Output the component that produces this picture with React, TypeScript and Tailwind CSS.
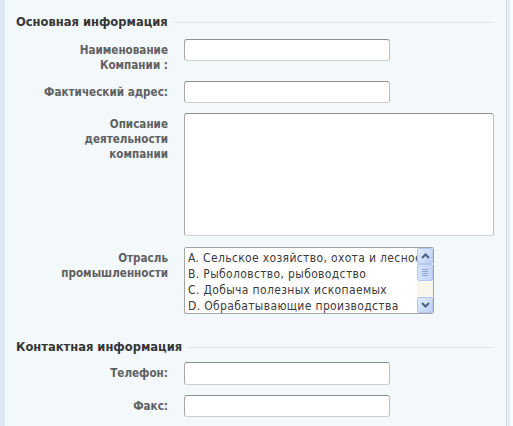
import React from "react";

const condensed = { fontFamily: "'DejaVu Sans Condensed', 'DejaVu Sans', sans-serif" };

function Field({ w, h }: { w: string; h: string }) {
  return (
    <div
      className={`${w} ${h} bg-white rounded-[3px] border border-t-[#8e8e8e] border-l-[#a6a6a6] border-r-[#bdbdbd] border-b-[#d0d0d0]`}
    />
  );
}

function Heading({ text, lineGap }: { text: string; lineGap: string }) {
  return (
    <div className="flex items-center pr-[12px]">
      <span className="text-[12.8px] leading-[14px] font-bold text-[#363636]" style={condensed}>
        {text}
      </span>
      <div className={`flex-1 h-px bg-[#dfe5ea] ${lineGap}`} />
    </div>
  );
}

function Label({ children }: { children: React.ReactNode }) {
  return (
    <div
      className="w-[152px] shrink-0 text-right pt-[4px] text-[11.6px] leading-[15px] font-bold text-[#616161]"
      style={condensed}
    >
      {children}
    </div>
  );
}

function Row({ label, children, mt }: { label: React.ReactNode; children: React.ReactNode; mt: string }) {
  return (
    <div className={`flex items-start gap-[16px] ${mt}`}>
      <Label>{label}</Label>
      {children}
    </div>
  );
}

const industries = [
  "A. Сельское хозяйство, охота и лесное",
  "B. Рыболовство, рыбоводство",
  "C. Добыча полезных ископаемых",
  "D. Обрабатывающие производства",
];

function ScrollButton({ dir }: { dir: "up" | "down" }) {
  return (
    <div className="w-[16px] h-[16px] rounded-[2px] border border-[#b4c8ef] bg-gradient-to-br from-[#e3ecfd] to-[#bcd0f6] flex items-center justify-center">
      <svg width="9" height="6" viewBox="0 0 9 6">
        <path
          d={dir === "up" ? "M1 5 L4.5 1.5 L8 5" : "M1 1 L4.5 4.5 L8 1"}
          fill="none"
          stroke="#4d6185"
          strokeWidth="2"
        />
      </svg>
    </div>
  );
}

function IndustryList() {
  return (
    <div className="w-[250px] h-[67px] bg-white rounded-[2px] border border-[#a5a5a5] flex overflow-hidden">
      <div
        className="flex-1 overflow-hidden pl-[3px] pt-[2px] text-[12px] leading-[16px] tracking-[0.35px] text-[#3b3b3b] whitespace-nowrap"
        style={condensed}
      >
        {industries.map((t) => (
          <div key={t}>{t}</div>
        ))}
      </div>
      <div className="w-[16px] flex flex-col bg-[#f7f5ec]">
        <ScrollButton dir="up" />
        <div className="h-[17px] rounded-[2px] border border-[#b4c8ef] bg-gradient-to-r from-[#d6e2fb] to-[#c3d4f7] flex flex-col items-center justify-center gap-[1px]">
          <div className="w-[6px] h-px bg-[#8ea6d8]" />
          <div className="w-[6px] h-px bg-[#8ea6d8]" />
          <div className="w-[6px] h-px bg-[#8ea6d8]" />
          <div className="w-[6px] h-px bg-[#8ea6d8]" />
        </div>
        <div className="flex-1" />
        <ScrollButton dir="down" />
      </div>
    </div>
  );
}

export default function App() {
  return (
    <div className="flex w-[513px] h-[426px] bg-[#f3f8fb] overflow-hidden">
      <div className="w-[5px] shrink-0 bg-[#dde9f2]" />
      <div className="flex-1 flex flex-col pl-[11px] pt-[15px]">
        <Heading text="Основная информация" lineGap="ml-[6px]" />
        <Row mt="mt-[10px]" label={<>Наименование<br />Компании :</>}>
          <Field w="w-[206px]" h="h-[22px]" />
        </Row>
        <Row mt="mt-[8px]" label="Фактический адрес:">
          <Field w="w-[206px]" h="h-[22px]" />
        </Row>
        <Row mt="mt-[10px]" label={<>Описание<br />деятельности<br />компании</>}>
          <Field w="w-[310px]" h="h-[123px]" />
        </Row>
        <Row mt="mt-[11px]" label={<>Отрасль<br />промышленности</>}>
          <IndustryList />
        </Row>
        <div className="mt-[26px]">
          <Heading text="Контактная информация" lineGap="ml-[7px]" />
        </div>
        <Row mt="mt-[8px]" label="Телефон:">
          <Field w="w-[206px]" h="h-[23px]" />
        </Row>
        <Row mt="mt-[10px]" label="Факс:">
          <Field w="w-[206px]" h="h-[22px]" />
        </Row>
      </div>
      <div className="w-[1px] shrink-0 bg-[#d3e0ea]" />
      <div className="w-[3px] shrink-0 bg-[#e6eff5]" />
      <div className="w-[3px] shrink-0 bg-[#fafcfd]" />
    </div>
  );
}
